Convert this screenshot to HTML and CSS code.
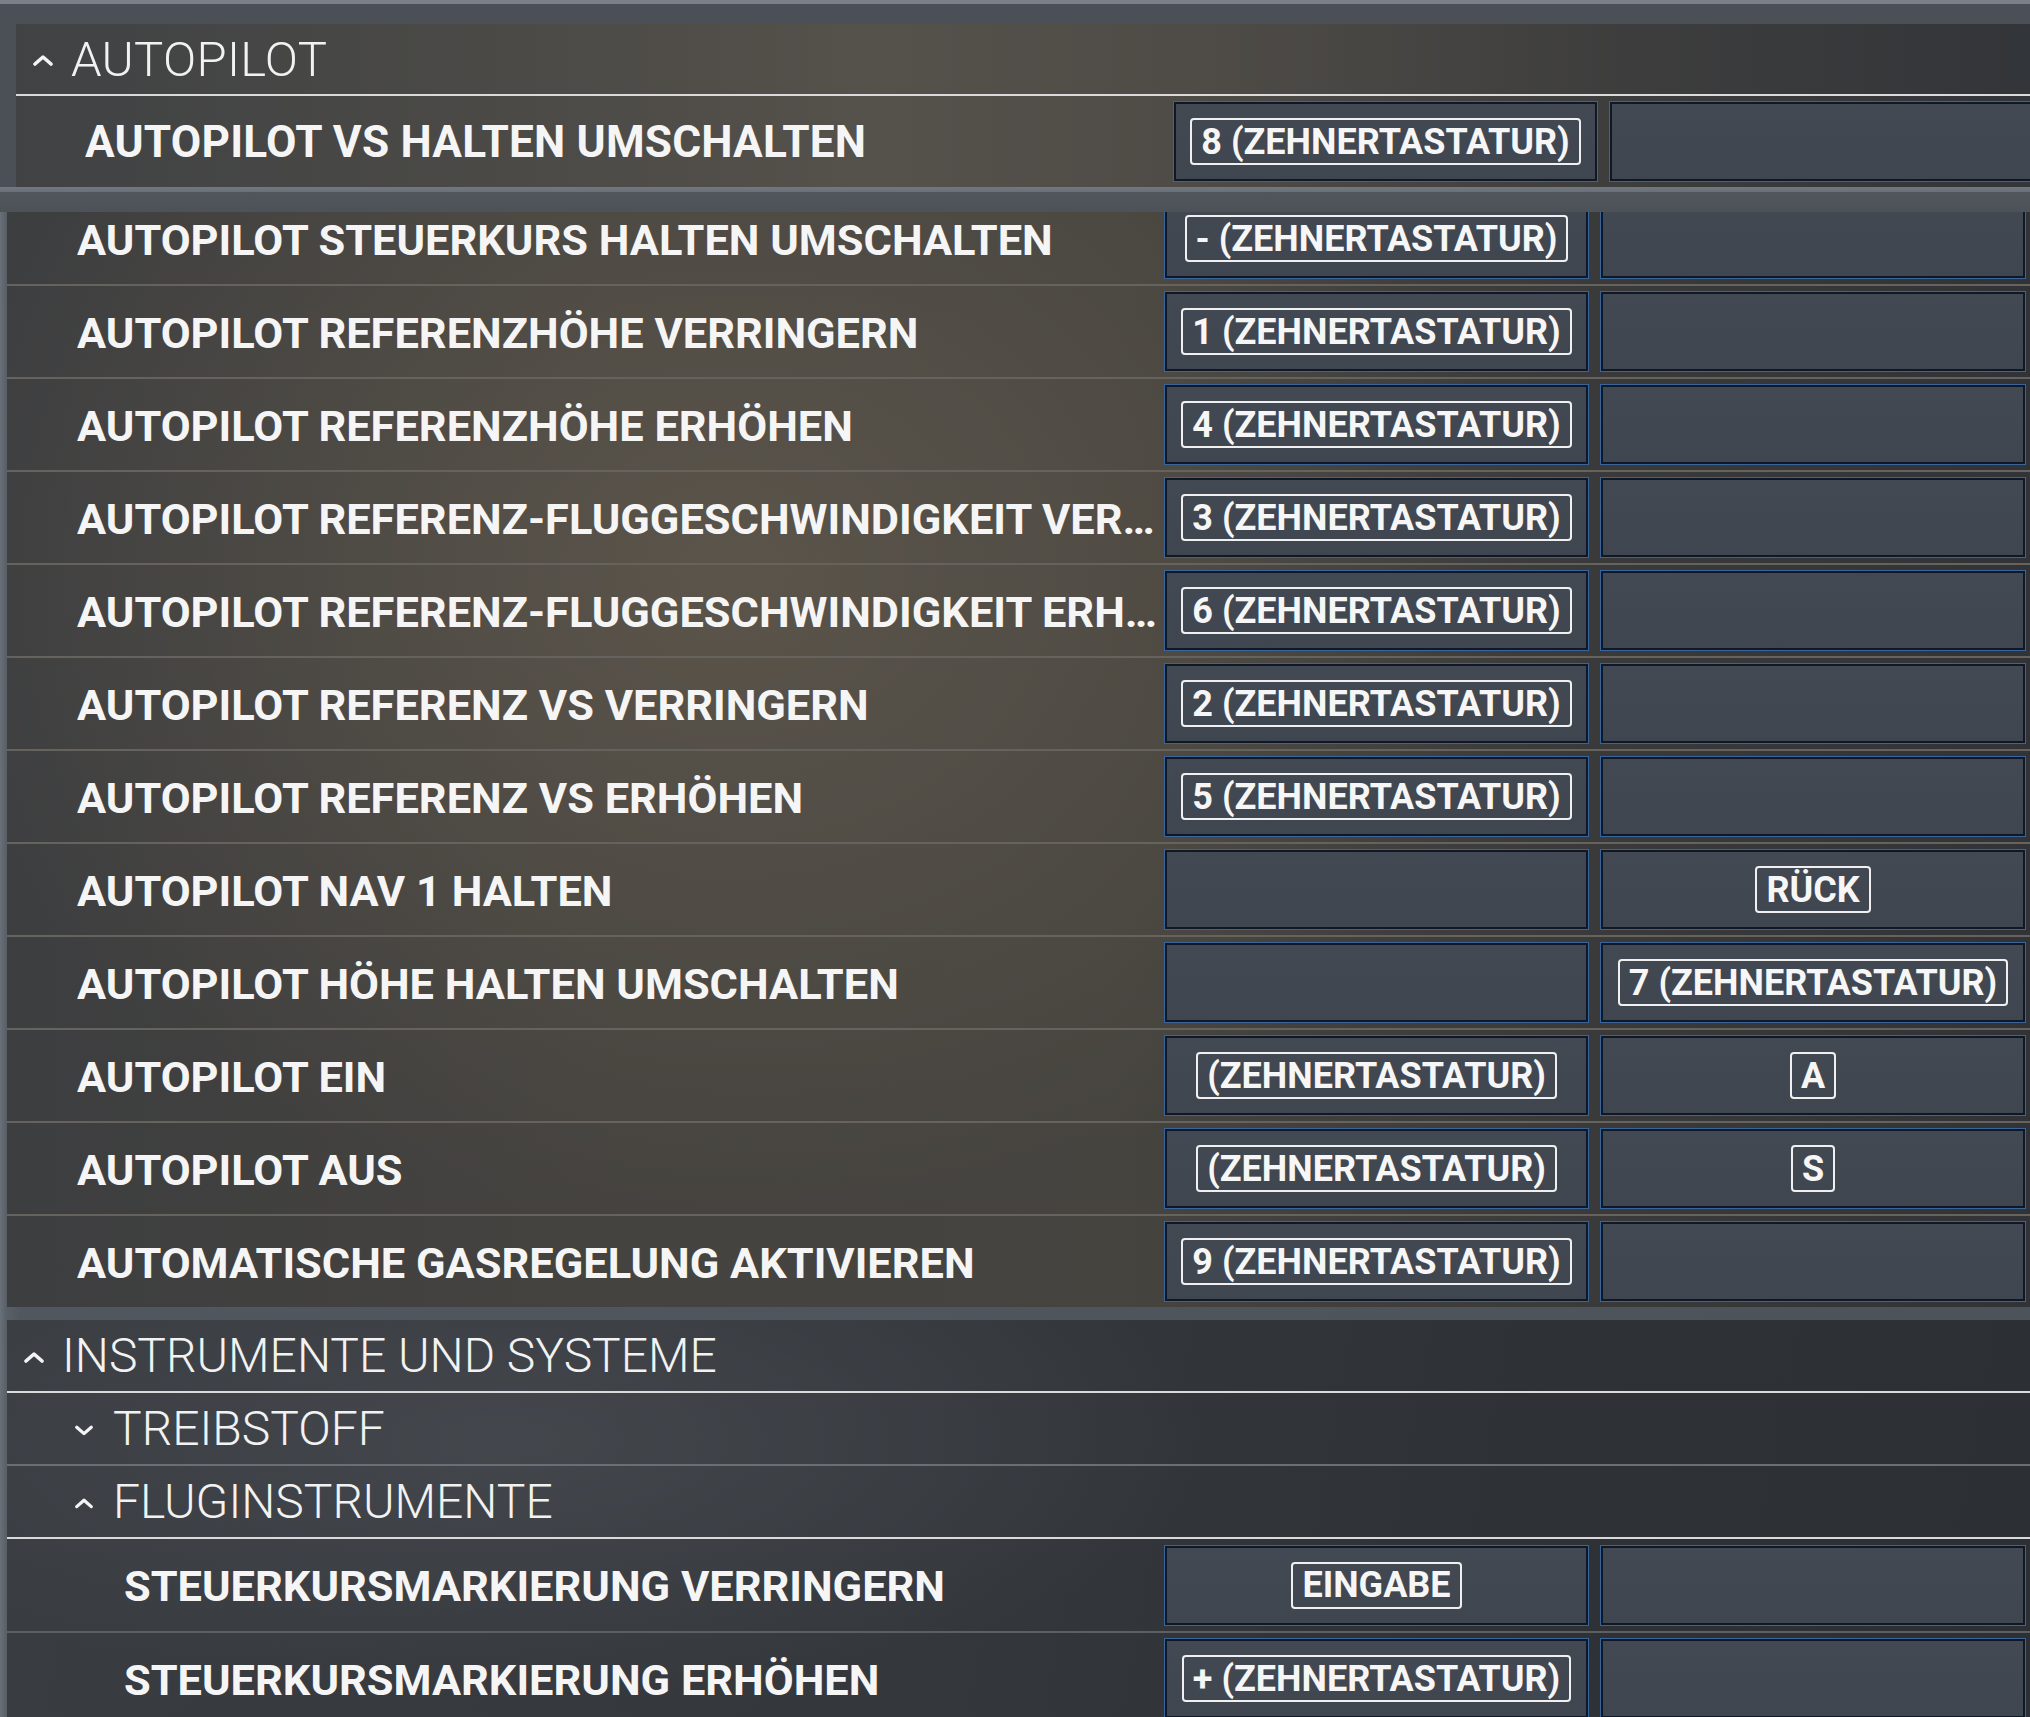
FILE: index.html
```html
<!DOCTYPE html>
<html lang="de">
<head>
  <meta charset="UTF-8">
  <meta name="viewport" content="width=device-width, initial-scale=1.0">
  <title>Steuerung | Tastatur</title>
  <link rel="stylesheet" href="styles.css">
</head>
<body>
  <div class="screen">
    <div class="top-edge"></div>

    <div class="pinned">
      <div class="panel panel-pinned">
        <div class="group-head">
          <svg class="caret" viewBox="0 0 22 12"><polyline points="3,10 11,3 19,10"/></svg>
          <span>AUTOPILOT</span>
        </div>
        <div class="binding">
          <div class="label">AUTOPILOT VS HALTEN UMSCHALTEN</div>
          <div class="slot"><span class="key">8 (ZEHNERTASTATUR)</span></div>
          <div class="slot"></div>
        </div>
      </div>
    </div>

    <div class="list">
      <div class="list-scroll">
        <div class="panel panel-autopilot">
          <div class="binding">
            <div class="label">AUTOPILOT STEUERKURS HALTEN UMSCHALTEN</div>
            <div class="slot"><span class="key">- (ZEHNERTASTATUR)</span></div>
            <div class="slot"></div>
          </div>
          <div class="binding">
            <div class="label">AUTOPILOT REFERENZHÖHE VERRINGERN</div>
            <div class="slot"><span class="key">1 (ZEHNERTASTATUR)</span></div>
            <div class="slot"></div>
          </div>
          <div class="binding">
            <div class="label">AUTOPILOT REFERENZHÖHE ERHÖHEN</div>
            <div class="slot"><span class="key">4 (ZEHNERTASTATUR)</span></div>
            <div class="slot"></div>
          </div>
          <div class="binding">
            <div class="label">AUTOPILOT REFERENZ-FLUGGESCHWINDIGKEIT VERRINGERN</div>
            <div class="slot"><span class="key">3 (ZEHNERTASTATUR)</span></div>
            <div class="slot"></div>
          </div>
          <div class="binding">
            <div class="label">AUTOPILOT REFERENZ-FLUGGESCHWINDIGKEIT ERHÖHEN</div>
            <div class="slot"><span class="key">6 (ZEHNERTASTATUR)</span></div>
            <div class="slot"></div>
          </div>
          <div class="binding">
            <div class="label">AUTOPILOT REFERENZ VS VERRINGERN</div>
            <div class="slot"><span class="key">2 (ZEHNERTASTATUR)</span></div>
            <div class="slot"></div>
          </div>
          <div class="binding">
            <div class="label">AUTOPILOT REFERENZ VS ERHÖHEN</div>
            <div class="slot"><span class="key">5 (ZEHNERTASTATUR)</span></div>
            <div class="slot"></div>
          </div>
          <div class="binding">
            <div class="label">AUTOPILOT NAV 1 HALTEN</div>
            <div class="slot"></div>
            <div class="slot"><span class="key">RÜCK</span></div>
          </div>
          <div class="binding">
            <div class="label">AUTOPILOT HÖHE HALTEN UMSCHALTEN</div>
            <div class="slot"></div>
            <div class="slot"><span class="key">7 (ZEHNERTASTATUR)</span></div>
          </div>
          <div class="binding">
            <div class="label">AUTOPILOT EIN</div>
            <div class="slot"><span class="key">(ZEHNERTASTATUR)</span></div>
            <div class="slot"><span class="key">A</span></div>
          </div>
          <div class="binding">
            <div class="label">AUTOPILOT AUS</div>
            <div class="slot"><span class="key">(ZEHNERTASTATUR)</span></div>
            <div class="slot"><span class="key">S</span></div>
          </div>
          <div class="binding">
            <div class="label">AUTOMATISCHE GASREGELUNG AKTIVIEREN</div>
            <div class="slot"><span class="key">9 (ZEHNERTASTATUR)</span></div>
            <div class="slot"></div>
          </div>
        </div>

        <div class="panel panel-instruments">
          <div class="group-head">
            <svg class="caret" viewBox="0 0 22 12"><polyline points="3,10 11,3 19,10"/></svg>
            <span>INSTRUMENTE UND SYSTEME</span>
          </div>
          <div class="sub-head closed">
            <svg class="caret" viewBox="0 0 22 12"><polyline points="3,3 11,10 19,3"/></svg>
            <span>TREIBSTOFF</span>
          </div>
          <div class="sub-head">
            <svg class="caret" viewBox="0 0 22 12"><polyline points="3,10 11,3 19,10"/></svg>
            <span>FLUGINSTRUMENTE</span>
          </div>
          <div class="binding nested">
            <div class="label">STEUERKURSMARKIERUNG VERRINGERN</div>
            <div class="slot"><span class="key">EINGABE</span></div>
            <div class="slot"></div>
          </div>
          <div class="binding nested">
            <div class="label">STEUERKURSMARKIERUNG ERHÖHEN</div>
            <div class="slot"><span class="key">+ (ZEHNERTASTATUR)</span></div>
            <div class="slot"></div>
          </div>
        </div>
      </div>
    </div>
  </div>
</body>
</html>
```

FILE: styles.css
```css
html, body {
  margin: 0;
  padding: 0;
  overflow: hidden;
}
body {
  font-family: Roboto, "Liberation Sans", sans-serif;
  color: #f4f4f4;
  background: #52585f;
}
.screen {
  width: 2030px;
  height: 1717px;
  overflow: hidden;
  background: linear-gradient(90deg, #6a7077 0, #5a6067 6px, #51575e 20px, #4d535a 100%);
}
.top-edge {
  height: 4px;
  background: #7b8189;
}

/* pinned header block */
.pinned {
  height: 208px;
  box-sizing: border-box;
  padding: 20px 0 0 16px;
  overflow: hidden;
  background: linear-gradient(180deg, #4a5056 0, #4a5056 183px, #727880 183px, #6a7077 188px, #50565c 188px, #4c5258 100%);
}
.panel-pinned {
  width: 2023px;
  background: linear-gradient(90deg, #404244 0%, #4a4946 22%, #55514b 42%, #4f4c47 58%, #3d3d3d 80%, #323539 100%);
}
.panel-pinned .group-head {
  height: 72px;
}
.panel-pinned .binding {
  height: 91px;
  border-top: 0;
  padding-left: 69px;
}
.panel-pinned .label {
  font-size: 44.2px;
  letter-spacing: 0.2px;
  padding-top: 1px;
}

/* scrolling list */
.list {
  height: 1505px;
  overflow: hidden;
}
.list-scroll {
  margin-top: -19px;
  padding-left: 7px;
}
.panel-autopilot {
  background:
    radial-gradient(ellipse 800px 650px at 720px 380px, rgba(98, 90, 78, 0.75), rgba(98, 90, 78, 0) 100%),
    linear-gradient(90deg, #3d3e40 0%, #45433f 30%, #46443f 55%, #3a3a3a 78%, #313336 100%);
}
.panel-instruments {
  margin-top: 13px;
  background:
    radial-gradient(ellipse 700px 260px at 500px 120px, rgba(78, 82, 88, 0.55), rgba(78, 82, 88, 0) 100%),
    linear-gradient(100deg, #393d42 0%, #34383d 45%, #2e3237 75%, #2c3035 100%);
}

/* group and sub-group headers */
.group-head, .sub-head {
  display: flex;
  align-items: center;
  box-sizing: border-box;
  height: 73px;
  font-weight: 300;
  font-size: 48px;
  color: #f2f2f2;
  border-bottom: 2px solid #dadada;
}
.group-head {
  padding-left: 16px;
}
.panel-pinned .group-head span {
  font-size: 49px;
  letter-spacing: 0.3px;
}
.sub-head {
  padding-left: 67px;
}
.sub-head.closed {
  border-bottom-color: #6b6e72;
}
.caret {
  width: 22px;
  height: 12px;
  margin-right: 17px;
  margin-top: 2px;
  fill: none;
  stroke: #f4f4f4;
  stroke-width: 3.6;
  stroke-linecap: round;
  stroke-linejoin: round;
}
.sub-head .caret {
  width: 20px;
  margin-right: 19px;
}

/* one action with its two key slots */
.binding {
  display: grid;
  grid-template-columns: minmax(0, 1fr) 423px 424px;
  column-gap: 13px;
  align-items: center;
  height: 93px;
  box-sizing: border-box;
  padding: 0 5px 0 70px;
  border-top: 2px solid #66625e;
}
.panel-autopilot .binding:first-child {
  height: 91px;
  border-top: 0;
}
.binding.nested {
  padding-left: 117px;
  border-top-color: #5c5f63;
}
.sub-head + .binding {
  height: 92px;
  border-top: 0;
}
.label {
  margin-right: -6px;
  padding-top: 3px;
  font-weight: 700;
  font-size: 43.4px;
  white-space: nowrap;
  overflow: hidden;
  text-overflow: ellipsis;
  color: #f5f5f5;
}
.slot {
  height: 79px;
  box-sizing: border-box;
  background: linear-gradient(180deg, #434952 0%, #40464f 100%);
  border: 2px solid #0e1828;
  box-shadow: 0 0 0 1px #3a6599;
  display: flex;
  align-items: center;
  justify-content: center;
}
.key {
  display: flex;
  align-items: center;
  height: 47px;
  box-sizing: border-box;
  padding: 0 9px;
  border: 2px solid #f0f0f0;
  border-radius: 4px;
  font-weight: 700;
  font-size: 36px;
  line-height: 1;
  color: #f6f6f6;
  white-space: nowrap;
}
```
